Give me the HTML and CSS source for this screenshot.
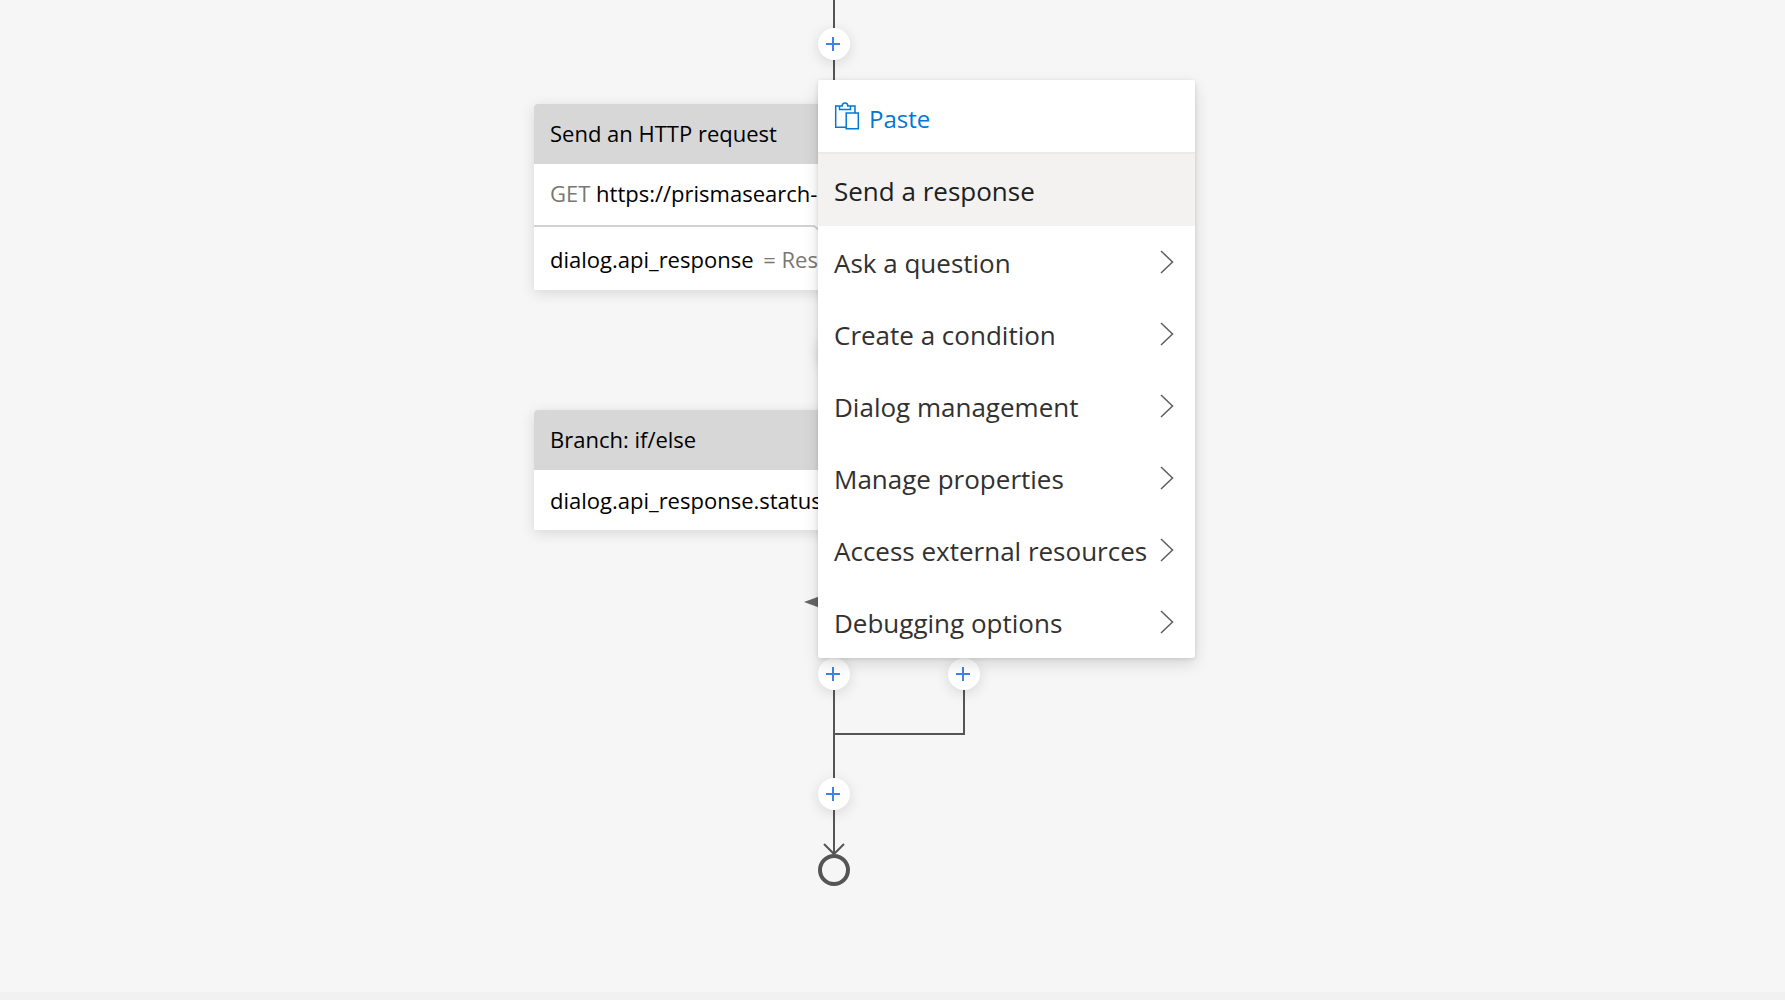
FILE: index.html
```html
<!DOCTYPE html>
<html lang="en">
<head>
<meta charset="utf-8">
<title>Dialog flow</title>
<link rel="stylesheet" href="styles.css">
</head>
<body>
<main class="canvas">
  <div class="flow">
    <svg class="edges" width="600" height="900" viewBox="0 0 600 900" aria-hidden="true">
      <path d="M300 0V854M430 674V734H300"/>
      <path class="arrow" d="M290 844L300 854L310 844"/>
      <path class="diamond" d="M270 602L300 591L330 602L300 613Z"/>
    </svg>
    <button class="add add-start" aria-label="Add action"><svg viewBox="0 0 16 16"><path d="M8 1V15M1 8H15"/></svg></button>
    <section class="card request">
      <h2 class="card-title">Send an HTTP request</h2>
      <p class="card-line"><span class="muted">GET</span> https://prismasearch-</p>
      <svg class="separator" width="600" height="6" viewBox="0 0 600 6" aria-hidden="true"><path d="M0 2H280L285 6"/></svg>
      <p class="card-line card-result">dialog.api_response <span class="muted assigned">= Result</span></p>
    </section>
    <button class="add add-between" aria-label="Add action"><svg viewBox="0 0 16 16"><path d="M8 1V15M1 8H15"/></svg></button>
    <section class="card branch">
      <h2 class="card-title">Branch: if/else</h2>
      <p class="card-line">dialog.api_response.status</p>
    </section>
    <button class="add add-true" aria-label="Add action"><svg viewBox="0 0 16 16"><path d="M8 1V15M1 8H15"/></svg></button>
    <button class="add add-false" aria-label="Add action"><svg viewBox="0 0 16 16"><path d="M8 1V15M1 8H15"/></svg></button>
    <button class="add add-end" aria-label="Add action"><svg viewBox="0 0 16 16"><path d="M8 1V15M1 8H15"/></svg></button>
    <div class="end"></div>
    <div class="menu">
      <button class="item paste"><svg class="clipboard" width="26" height="28" viewBox="0 0 26 28" aria-hidden="true"><path d="M6 4H1.700V25.300H12M16 4H21V10.500M5.500 4V7.500H16.500V4H13.800C13.800 0 8.200 0 8.200 4ZM12.200 11H24.300V26.800H12.200Z"/></svg>Paste</button>
      <button class="item active">Send a response</button>
      <button class="item">Ask a question<svg class="chevron" viewBox="0 0 14 24"><path d="M1 1L12.500 12L1 23"/></svg></button>
      <button class="item">Create a condition<svg class="chevron" viewBox="0 0 14 24"><path d="M1 1L12.500 12L1 23"/></svg></button>
      <button class="item">Dialog management<svg class="chevron" viewBox="0 0 14 24"><path d="M1 1L12.500 12L1 23"/></svg></button>
      <button class="item">Manage properties<svg class="chevron" viewBox="0 0 14 24"><path d="M1 1L12.500 12L1 23"/></svg></button>
      <button class="item">Access external resources<svg class="chevron" viewBox="0 0 14 24"><path d="M1 1L12.500 12L1 23"/></svg></button>
      <button class="item">Debugging options<svg class="chevron" viewBox="0 0 14 24"><path d="M1 1L12.500 12L1 23"/></svg></button>
    </div>
  </div>
</main>
<footer class="status"></footer>
</body>
</html>
```
FILE: styles.css
```css
* { box-sizing: border-box; }
body {
  margin: 0;
  min-height: 100vh;
  display: flex;
  flex-direction: column;
  background: #f6f6f6;
  font-family: "Segoe UI", "Open Sans", "Noto Sans", sans-serif;
  color: #000;
}
button { font: inherit; border: 0; padding: 0; cursor: pointer; }
svg { display: block; flex: none; fill: none; }
.canvas { flex: 1; position: relative; overflow: hidden; }
.status { height: 8px; background: #f1f1f1; }

/* Flow chart, drawn around the trunk at x = 300 */
.flow { position: absolute; top: 0; left: round(down, calc(50% - 358px), 1px); width: 600px; height: 900px; }
.edges { position: absolute; inset: 0; stroke: #555; stroke-width: 2; }
.edges .diamond { fill: #656565; stroke: none; }

.card {
  position: absolute;
  left: 0;
  width: 600px;
  background: #fff;
  border-radius: 4px 4px 0 0;
  box-shadow: 0 3px 14px rgba(0, 0, 0, .13);
}
.request { top: 104px; }
.branch { top: 410px; }
.card-title, .card-line { margin: 0; padding: 0 16px; height: 60px; line-height: 58px; font-size: 22px; font-weight: 400; white-space: nowrap; }
.card-title { background: #d7d7d7; border-radius: 4px 4px 0 0; }
.branch .card-line { line-height: 60px; }
.separator { stroke: #d2d2d2; stroke-width: 2; }
.muted { color: #797775; }
.assigned { margin-left: 4px; }

.add {
  position: absolute;
  left: 284px;
  width: 32px;
  height: 32px;
  border-radius: 50%;
  background: #fff;
  box-shadow: 0 3px 14px rgba(0, 0, 0, .13);
  display: grid;
  place-items: center;
}
.add svg { width: 16px; height: 16px; margin-right: 2px; stroke: #3f82ea; stroke-width: 2; }
.add-start { top: 28px; }
.add-between { top: 334px; }
.add-true, .add-false { top: 658px; }
.add-false { left: 414px; }
.add-end { top: 778px; }
.end { position: absolute; left: 284px; top: 854px; width: 32px; height: 32px; border: 4px solid #555; border-radius: 50%; background: #f6f6f6; }

.menu {
  position: absolute;
  left: 284px;
  top: 80px;
  width: 377px;
  background: #fff;
  border-radius: 3px;
  overflow: hidden;
  box-shadow: 0 6px 16px rgba(0, 0, 0, .13), 0 1px 4px rgba(0, 0, 0, .11);
}
.item {
  display: flex;
  align-items: center;
  justify-content: space-between;
  width: 100%;
  height: 72px;
  padding: 2px 21px 0 16px;
  background: #fff;
  color: #323130;
  font-size: 26px;
  line-height: 36px;
  text-align: left;
  white-space: nowrap;
}
.paste { justify-content: flex-start; gap: 9px; height: 74px; padding-top: 6px; border-bottom: 2px solid #eaeaea; color: #0078d4; font-size: 24px; }
.active { background: #f3f2f1; color: #201f1e; }
.clipboard { margin-bottom: 6px; stroke: #0078d4; stroke-width: 1.500; }
.chevron { width: 14px; height: 24px; margin-bottom: 2px; stroke: #605e5c; stroke-width: 1.500; }
```
